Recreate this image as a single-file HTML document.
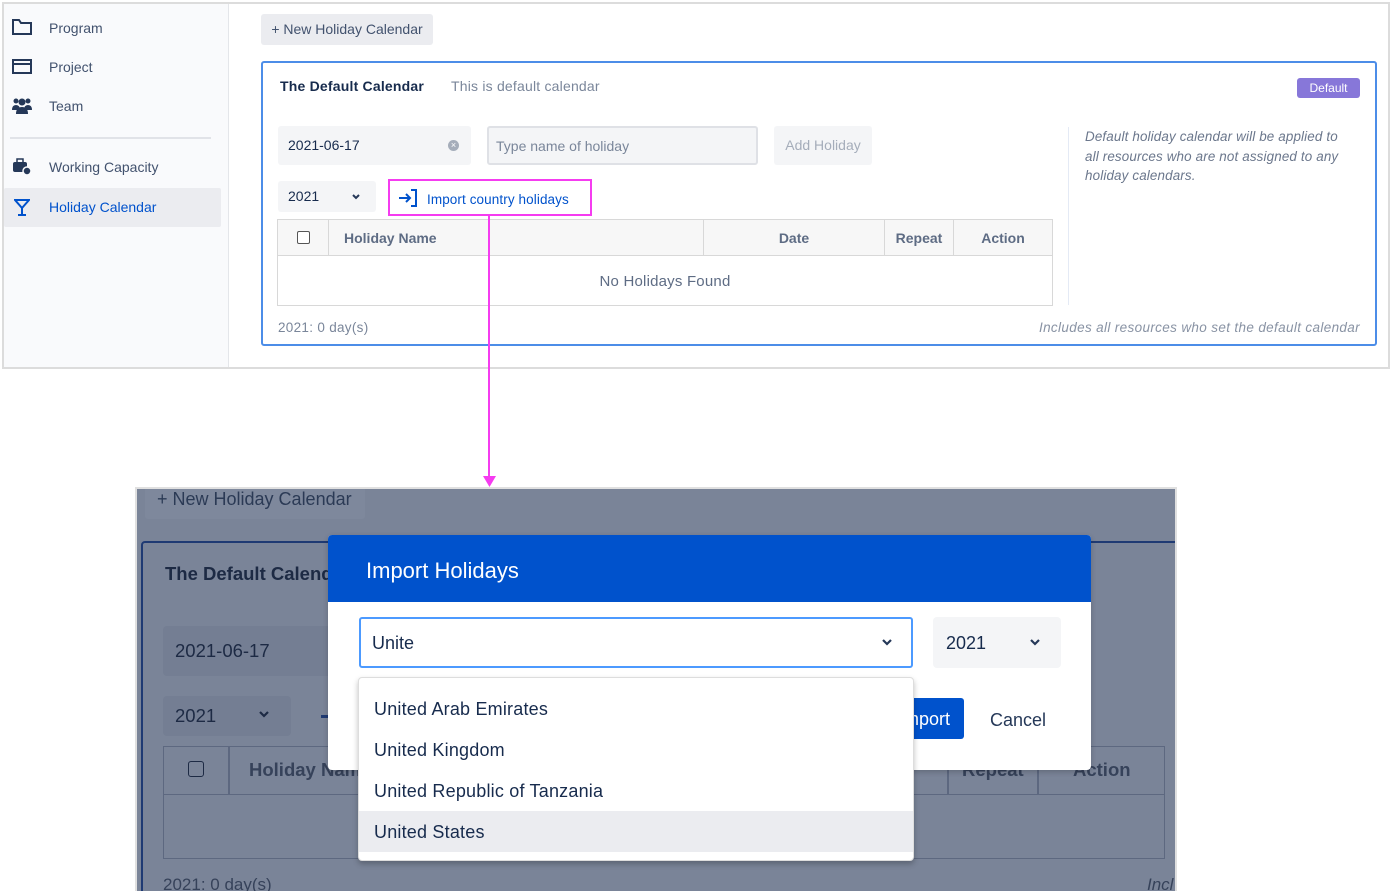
<!DOCTYPE html>
<html><head><meta charset="utf-8"><style>
*{box-sizing:border-box;margin:0;padding:0}
body{width:1391px;height:891px;background:#fff;position:relative;font-family:"Liberation Sans",sans-serif;overflow:hidden;color:#172b4d}
.a{position:absolute}
.nav{font-size:14px;color:#42526e}
.th{font-weight:bold;font-size:14px;color:#5e6c84;text-align:center;line-height:36px}
</style></head><body>
<div class="a" style="left:2px;top:2px;width:1388px;height:367px;border:2px solid #dcdcdc;background:#fff"></div>
<div class="a" style="left:4px;top:4px;width:225px;height:363px;background:#f9fafc;border-right:1px solid #e4e6ea"></div>
<svg class="a" style="left:11px;top:18px" width="22" height="18" viewBox="0 0 22 18"><path d="M2 2h6l2 3h10v11H2z" fill="none" stroke="#253858" stroke-width="2"/></svg>
<div class="a nav" style="left:49px;top:20px">Program</div>
<svg class="a" style="left:12px;top:59px" width="20" height="16" viewBox="0 0 20 16"><rect x="1" y="1" width="18" height="13" fill="none" stroke="#253858" stroke-width="2"/><path d="M1 5h18" stroke="#253858" stroke-width="2"/></svg>
<div class="a nav" style="left:49px;top:59px">Project</div>
<svg class="a" style="left:11px;top:97px" width="22" height="18" viewBox="0 0 22 18"><circle cx="5" cy="4" r="2.5" fill="#253858"/><circle cx="17" cy="4" r="2.5" fill="#253858"/><circle cx="11" cy="5" r="3.5" fill="#253858"/><path d="M1 13q0-5 4-5t4 5zM13 13q0-5 4-5t4 5zM5 17q0-7 6-7t6 7z" fill="#253858"/></svg>
<div class="a nav" style="left:49px;top:98px">Team</div>
<div class="a" style="left:10px;top:137px;width:201px;height:2px;background:#e1e3e8"></div>
<svg class="a" style="left:12px;top:158px" width="20" height="18" viewBox="0 0 20 18"><rect x="1" y="4" width="14" height="10" rx="2" fill="#253858"/><rect x="5" y="1" width="6" height="4" fill="none" stroke="#253858" stroke-width="1.5"/><circle cx="15" cy="13" r="4" fill="#253858" stroke="#f9fafc" stroke-width="1.5"/></svg>
<div class="a nav" style="left:49px;top:159px">Working Capacity</div>
<div class="a" style="left:4px;top:188px;width:217px;height:39px;background:#ebecf0;border-radius:2px"></div>
<svg class="a" style="left:14px;top:199px" width="16" height="17" viewBox="0 0 16 17"><path d="M1 1h14L8 9z" fill="none" stroke="#0052cc" stroke-width="2"/><path d="M8 9v6M4 16h8" stroke="#0052cc" stroke-width="2"/></svg>
<div class="a nav" style="left:49px;top:199px;color:#0052cc">Holiday Calendar</div>

<div class="a" style="left:261px;top:14px;width:172px;height:31px;background:#ebecf0;border-radius:3px;font-size:14px;color:#42526e;line-height:31px;text-align:center">+ New Holiday Calendar</div>
<div class="a" style="left:261px;top:61px;width:1116px;height:285px;border:2px solid #4c8de8;border-radius:3px"></div>
<div class="a" style="left:280px;top:78px;font-size:14px;font-weight:bold;color:#172b4d;letter-spacing:0.2px">The Default Calendar</div>
<div class="a" style="left:451px;top:78px;font-size:14px;color:#7a869a;letter-spacing:0.2px">This is default calendar</div>
<div class="a" style="left:1297px;top:78px;width:63px;height:20px;background:#8777d9;border-radius:3px;color:#fff;font-size:12px;line-height:20px;text-align:center">Default</div>
<div class="a" style="left:278px;top:126px;width:193px;height:39px;background:#f4f5f7;border-radius:3px;font-size:14px;line-height:39px;padding-left:10px">2021-06-17</div>
<div class="a" style="left:448px;top:140px;width:11px;height:11px;border-radius:50%;background:#a5adba;color:#fff;font-size:9px;line-height:11px;text-align:center">×</div>
<div class="a" style="left:487px;top:126px;width:271px;height:39px;background:#f4f5f7;border:2px solid #dfe1e6;border-radius:3px;font-size:14px;color:#7a869a;line-height:37px;padding-left:7px">Type name of holiday</div>
<div class="a" style="left:774px;top:126px;width:98px;height:39px;background:#f4f5f7;border-radius:3px;font-size:14px;color:#a5adba;line-height:39px;text-align:center">Add Holiday</div>
<div class="a" style="left:278px;top:181px;width:98px;height:31px;background:#f4f5f7;border-radius:3px;font-size:14px;line-height:31px;padding-left:10px">2021</div>
<svg class="a" style="left:351px;top:193px" width="10" height="7" viewBox="0 0 10 7"><path d="M2 2l3 3 3-3" fill="none" stroke="#253858" stroke-width="2"/></svg>
<div class="a" style="left:388px;top:179px;width:204px;height:37px;border:2px solid #f53cf0"></div>
<svg class="a" style="left:398px;top:189px" width="20" height="18" viewBox="0 0 20 18"><path d="M1 9h11M8 5l4 4-4 4M13 1h5v16h-5" fill="none" stroke="#0052cc" stroke-width="2"/></svg>
<div class="a" style="left:427px;top:192px;font-size:13.5px;color:#0052cc;letter-spacing:0.1px">Import country holidays</div>
<div class="a" style="left:277px;top:219px;width:776px;height:87px;border:1px solid #d8d8d8"></div>
<div class="a" style="left:278px;top:220px;width:774px;height:36px;background:#f7f7f7;border-bottom:1px solid #d8d8d8"></div>
<div class="a" style="left:328px;top:220px;width:1px;height:36px;background:#d8d8d8"></div>
<div class="a" style="left:703px;top:220px;width:1px;height:36px;background:#d8d8d8"></div>
<div class="a" style="left:884px;top:220px;width:1px;height:36px;background:#d8d8d8"></div>
<div class="a" style="left:953px;top:220px;width:1px;height:36px;background:#d8d8d8"></div>
<div class="a" style="left:297px;top:231px;width:13px;height:13px;border:1.5px solid #555;border-radius:2px;background:#fff"></div>
<div class="a th" style="left:344px;top:220px;text-align:left">Holiday Name</div>
<div class="a th" style="left:704px;top:220px;width:180px">Date</div>
<div class="a th" style="left:885px;top:220px;width:68px">Repeat</div>
<div class="a th" style="left:954px;top:220px;width:98px">Action</div>
<div class="a" style="left:278px;top:273px;width:774px;text-align:center;font-size:15px;color:#5e6c84;letter-spacing:0.2px">No Holidays Found</div>
<div class="a" style="left:1068px;top:127px;width:1px;height:178px;background:#e4eaf5"></div>
<div class="a" style="left:1085px;top:127px;width:266px;font-size:13.4px;font-style:italic;color:#6b778c;line-height:19.5px;letter-spacing:0.15px">Default holiday calendar will be applied to all resources who are not assigned to any holiday calendars.</div>
<div class="a" style="left:278px;top:320px;font-size:13.5px;color:#7a869a;letter-spacing:0.3px">2021: 0 day(s)</div>
<div class="a" style="left:960px;top:320px;width:400px;text-align:right;font-size:13.5px;font-style:italic;color:#8993a4;letter-spacing:0.35px">Includes all resources who set the default calendar</div>
<div class="a" style="left:488px;top:215px;width:2px;height:262px;background:#f53cf0"></div>
<svg class="a" style="left:483px;top:476px" width="13" height="11" viewBox="0 0 13 11"><path d="M0 0h13L6.5 11z" fill="#f53cf0"/></svg>

<div class="a" style="left:135px;top:487px;width:1042px;height:404px;background:#7a8498;border:2px solid #e0e0e0;border-bottom:none;overflow:hidden">
 <div class="a" style="left:8px;top:-2px;width:220px;height:32px;background:#7e889c;border-radius:3px;font-size:18px;color:#2b3a55;line-height:24px;padding-left:12px">+ New Holiday Calendar</div>
 <div class="a" style="left:4px;top:52px;width:1040px;height:380px;border:2px solid #1f3a73;border-radius:4px"></div>
 <div class="a" style="left:28px;top:74px;font-size:18.5px;font-weight:bold;color:#1d2a44">The Default Calendar</div>
 <div class="a" style="left:26px;top:137px;width:170px;height:50px;background:#747e93;border-radius:4px;font-size:18.5px;color:#1d2a44;line-height:50px;padding-left:12px">2021-06-17</div>
 <div class="a" style="left:26px;top:207px;width:128px;height:40px;background:#747e93;border-radius:4px;font-size:18.5px;color:#1d2a44;line-height:40px;padding-left:12px">2021</div>
 <svg class="a" style="left:121px;top:221px" width="12" height="9" viewBox="0 0 12 9"><path d="M2 2l4 4 4-4" fill="none" stroke="#1d2a44" stroke-width="2.2"/></svg>
 <div class="a" style="left:184px;top:226px;width:10px;height:3px;background:#1f3a73"></div>
 <div class="a" style="left:26px;top:257px;width:1002px;height:113px;border:1.5px solid #5d6880"></div>
 <div class="a" style="left:26px;top:257px;width:1002px;height:49px;border-bottom:1.5px solid #5d6880"></div>
 <div class="a" style="left:91px;top:257px;width:1.5px;height:49px;background:#5d6880"></div>
 <div class="a" style="left:810px;top:257px;width:1.5px;height:49px;background:#5d6880"></div>
 <div class="a" style="left:900px;top:257px;width:1.5px;height:49px;background:#5d6880"></div>
 <div class="a" style="left:51px;top:272px;width:16px;height:16px;border:1.5px solid #1d2a44;border-radius:3px"></div>
 <div class="a" style="left:112px;top:270px;font-size:18.5px;font-weight:bold;color:#36425a">Holiday Name</div>
 <div class="a" style="left:825px;top:270px;font-size:18.5px;font-weight:bold;color:#36425a">Repeat</div>
 <div class="a" style="left:936px;top:270px;font-size:18.5px;font-weight:bold;color:#36425a">Action</div>
 <div class="a" style="left:26px;top:386px;font-size:17px;color:#36425a">2021: 0 day(s)</div>
 <div class="a" style="left:1010px;top:386px;font-size:17px;font-style:italic;color:#36425a">Incl</div>
</div>
<div class="a" style="left:328px;top:535px;width:763px;height:235px;background:#fff;border-radius:4px;overflow:hidden;box-shadow:0 2px 6px rgba(0,0,0,.2)">
 <div style="height:67px;background:#0052cc;color:#fff;font-size:22px;line-height:72px;padding-left:38px">Import Holidays</div>
</div>
<div class="a" style="left:359px;top:617px;width:554px;height:51px;border:2px solid #4c9aff;border-radius:3px;font-size:18px;line-height:49px;padding-left:11px;color:#172b4d">Unite</div>
<svg class="a" style="left:881px;top:638px" width="12" height="9" viewBox="0 0 12 9"><path d="M2 2l4 4 4-4" fill="none" stroke="#253858" stroke-width="2.2"/></svg>
<div class="a" style="left:933px;top:617px;width:128px;height:51px;background:#f4f5f7;border-radius:4px;font-size:18px;line-height:53px;padding-left:13px;color:#172b4d">2021</div>
<svg class="a" style="left:1029px;top:638px" width="12" height="9" viewBox="0 0 12 9"><path d="M2 2l4 4 4-4" fill="none" stroke="#253858" stroke-width="2.2"/></svg>
<div class="a" style="left:880px;top:698px;width:84px;height:41px;background:#0052cc;border-radius:3px;color:#fff;font-size:18px;line-height:43px;text-align:right;padding-right:14px">Import</div>
<div class="a" style="left:990px;top:710px;font-size:18px;color:#253858">Cancel</div>
<div class="a" style="left:358px;top:677px;width:556px;height:184px;background:#fff;border:1px solid #ddd;border-radius:4px;box-shadow:0 3px 6px rgba(0,0,0,.25);overflow:hidden;font-size:18px;color:#172b4d;letter-spacing:0.2px">
 <div style="height:10px"></div>
 <div style="height:41px;line-height:43px;padding-left:15px">United Arab Emirates</div>
 <div style="height:41px;line-height:43px;padding-left:15px">United Kingdom</div>
 <div style="height:41px;line-height:43px;padding-left:15px">United Republic of Tanzania</div>
 <div style="height:41px;line-height:43px;padding-left:15px;background:#ebecf0">United States</div>
</div>
</body></html>
